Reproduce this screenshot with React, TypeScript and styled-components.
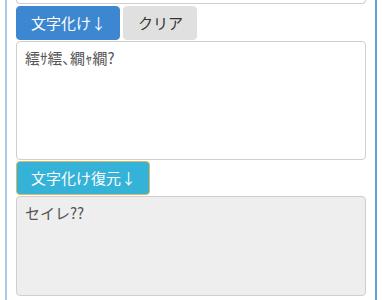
import styled, {createGlobalStyle} from "styled-components";

const GlobalStyle = createGlobalStyle`
    html, body {
        margin: 0;
        padding: 0;
        background: #fff;
        overflow: hidden;
    }
    body {
        font-family: "Noto Sans CJK JP", "Noto Sans", sans-serif;
    }
`

const Panel = styled.div`
    display: flex;
    flex-direction: column;
    gap: 1px;
    margin-left: 5px;
    width: 372px;
    height: 300px;
    box-sizing: border-box;
    padding: 0 9px;
    border-left: 2px solid #a9c9ea;
    border-right: 2px solid #5f9fdc;
`

const Field = styled.textarea<{ $readOnly?: boolean; $height: number }>`
    display: block;
    box-sizing: border-box;
    width: 350px;
    height: ${p => p.$height}px;
    margin: 0;
    padding: 6px 8px;
    font-family: "Noto Sans CJK JP", sans-serif;
    font-size: 15px;
    line-height: 20px;
    color: #555;
    background: ${p => p.$readOnly ? '#eeeeee' : '#ffffff'};
    border: 1px solid #cfcfcf;
    border-radius: 4px;
    resize: none;
    outline: none;
`

const TopField = styled.div`
    box-sizing: border-box;
    width: 350px;
    height: 4px;
    border: 1px solid #cfcfcf;
    border-top: none;
    border-radius: 0 0 4px 4px;
`

const ButtonRow = styled.div`
    display: flex;
    gap: 3px;
    margin-top: 1px;
`

const Button = styled.button<{ $variant: 'primary' | 'default' | 'info' }>`
    box-sizing: border-box;
    height: 34px;
    padding: 6px 13px 6px 14px;
    font-family: "Noto Sans CJK JP", sans-serif;
    font-size: 15px;
    line-height: 20px;
    border-radius: 4px;
    cursor: pointer;
    align-self: flex-start;
    color: ${p => p.$variant === 'default' ? '#333' : '#fff'};
    background: ${p => p.$variant === 'primary' ? '#3c87cf' : p.$variant === 'info' ? '#35b2d8' : '#e0e0e0'};
    border: 1px solid ${p => p.$variant === 'primary' ? '#3c87cf' : p.$variant === 'info' ? '#e2b65e' : '#e0e0e0'};
`

export default function App() {
    return (
        <>
            <GlobalStyle/>
            <Panel>
                <TopField/>
                <ButtonRow>
                    <Button $variant="primary">文字化け↓</Button>
                    <Button $variant="default">クリア</Button>
                </ButtonRow>
                <Field $height={119} defaultValue={'繧ｻ繧､繝ｬ繝?'}/>
                <Button $variant="info">文字化け復元↓</Button>
                <Field $height={100} $readOnly readOnly defaultValue={'セイレ??'}/>
            </Panel>
        </>
    )
}
